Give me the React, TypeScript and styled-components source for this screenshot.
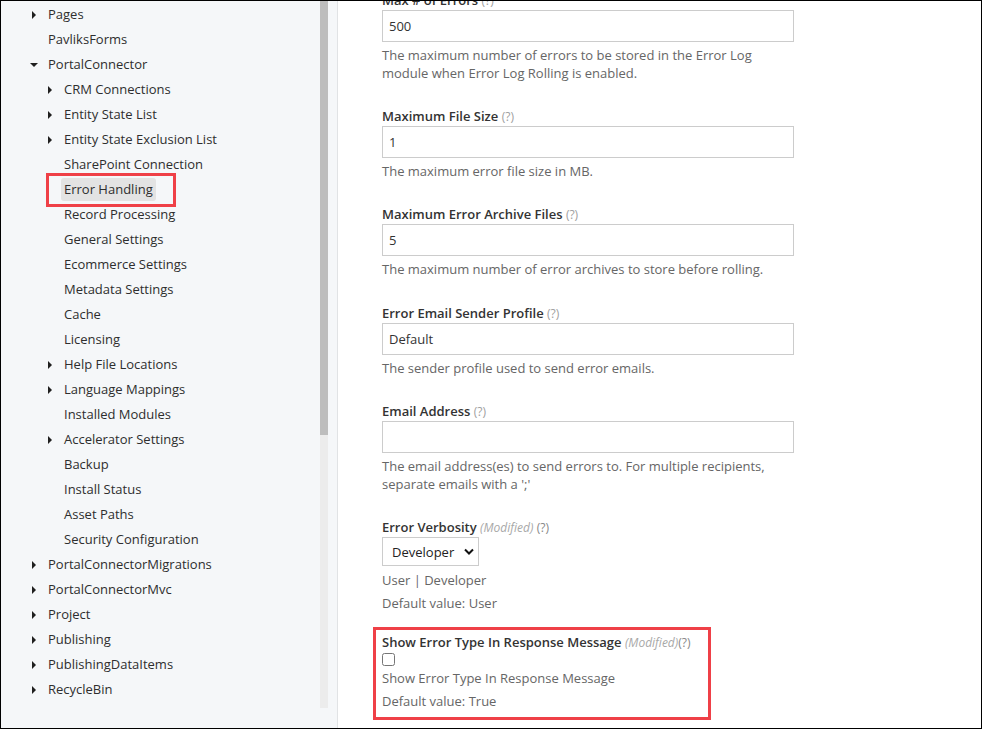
import React from "react"
import styled, { createGlobalStyle } from "styled-components"

const GlobalStyle = createGlobalStyle`
  html, body {
    margin: 0;
    padding: 0;
    background: #ffffff;
  }
  body {
    font-family: "Open Sans", "Liberation Sans", sans-serif;
    font-size: 13px;
    color: #333333;
  }
`

type TreeItem = {
  label: string
  depth: number
  toggle?: "closed" | "open"
  selected?: boolean
}

const tree: TreeItem[] = [
  { label: "Pages", depth: 0, toggle: "closed" },
  { label: "PavliksForms", depth: 0 },
  { label: "PortalConnector", depth: 0, toggle: "open" },
  { label: "CRM Connections", depth: 1, toggle: "closed" },
  { label: "Entity State List", depth: 1, toggle: "closed" },
  { label: "Entity State Exclusion List", depth: 1, toggle: "closed" },
  { label: "SharePoint Connection", depth: 1 },
  { label: "Error Handling", depth: 1, selected: true },
  { label: "Record Processing", depth: 1 },
  { label: "General Settings", depth: 1 },
  { label: "Ecommerce Settings", depth: 1 },
  { label: "Metadata Settings", depth: 1 },
  { label: "Cache", depth: 1 },
  { label: "Licensing", depth: 1 },
  { label: "Help File Locations", depth: 1, toggle: "closed" },
  { label: "Language Mappings", depth: 1, toggle: "closed" },
  { label: "Installed Modules", depth: 1 },
  { label: "Accelerator Settings", depth: 1, toggle: "closed" },
  { label: "Backup", depth: 1 },
  { label: "Install Status", depth: 1 },
  { label: "Asset Paths", depth: 1 },
  { label: "Security Configuration", depth: 1 },
  { label: "PortalConnectorMigrations", depth: 0, toggle: "closed" },
  { label: "PortalConnectorMvc", depth: 0, toggle: "closed" },
  { label: "Project", depth: 0, toggle: "closed" },
  { label: "Publishing", depth: 0, toggle: "closed" },
  { label: "PublishingDataItems", depth: 0, toggle: "closed" },
  { label: "RecycleBin", depth: 0, toggle: "closed" },
]

type Field = {
  label: string
  value: string
  help: string[]
}

const fields: Field[] = [
  {
    label: "Max # of Errors",
    value: "500",
    help: [
      "The maximum number of errors to be stored in the Error Log",
      "module when Error Log Rolling is enabled.",
    ],
  },
  { label: "Maximum File Size", value: "1", help: ["The maximum error file size in MB."] },
  {
    label: "Maximum Error Archive Files",
    value: "5",
    help: ["The maximum number of error archives to store before rolling."],
  },
  {
    label: "Error Email Sender Profile",
    value: "Default",
    help: ["The sender profile used to send error emails."],
  },
  {
    label: "Email Address",
    value: "",
    help: [
      "The email address(es) to send errors to. For multiple recipients,",
      "separate emails with a ';'",
    ],
  },
]

const TreeArrow = ({ state }: { state: "closed" | "open" }) => (
  <svg width="8" height="8" viewBox="0 0 8 8">
    {state === "closed" ? (
      <polygon points="2,0 6,4 2,8" fill="#1f1f1f" />
    ) : (
      <polygon points="0,2 8,2 4,6" fill="#1f1f1f" />
    )}
  </svg>
)

const Chevron = () => (
  <svg width="10" height="7" viewBox="0 0 10 7">
    <polyline points="1,1.5 5,5.5 9,1.5" fill="none" stroke="#111" strokeWidth="2" />
  </svg>
)

const App = () => {
  return (
    <>
      <GlobalStyle />
      <Frame>
        <Sidebar>
          <ScrollArea>
            <Tree>
              {tree.map((item) => (
                <TreeRow key={item.label} $depth={item.depth}>
                  <Toggle>{item.toggle && <TreeArrow state={item.toggle} />}</Toggle>
                  <TreeLabel $selected={item.selected}>{item.label}</TreeLabel>
                </TreeRow>
              ))}
            </Tree>
            <ScrollTrack>
              <ScrollThumb />
            </ScrollTrack>
          </ScrollArea>
        </Sidebar>
        <Main>
          <Form>
            {fields.map((f) => (
              <FieldBlock key={f.label}>
                <Label>
                  {f.label} <Hint>(?)</Hint>
                </Label>
                <TextInput defaultValue={f.value} />
                <Help>
                  {f.help.map((line) => (
                    <div key={line}>{line}</div>
                  ))}
                </Help>
              </FieldBlock>
            ))}

            <FieldBlock>
              <Label>
                Error Verbosity <Modified>(Modified)</Modified> <Hint $dark>(?)</Hint>
              </Label>
              <SelectBox>
                <NativeSelect defaultValue="Developer">
                  <option>User</option>
                  <option>Developer</option>
                </NativeSelect>
                <Chevron />
              </SelectBox>
              <Note>User | Developer</Note>
              <Note>Default value: User</Note>
            </FieldBlock>

            <Highlighted>
              <Label>
                Show Error Type In Response Message <Modified>(Modified)</Modified>
                <Hint $dark>(?)</Hint>
              </Label>
              <Check type="checkbox" />
              <Note $tight>Show Error Type In Response Message</Note>
              <Note>Default value: True</Note>
            </Highlighted>
          </Form>
        </Main>
      </Frame>
    </>
  )
}

const Frame = styled.div`
  width: 980px;
  height: 727px;
  border: 1px solid #000;
  display: flex;
  overflow: hidden;
  background: #fff;
`

const Sidebar = styled.div`
  width: 336px;
  flex-shrink: 0;
  background: #f5f7f9;
  border-right: 1px solid #e1e3e5;
  padding-bottom: 20px;
  display: flex;
  flex-direction: column;
`

const ScrollArea = styled.div`
  flex: 1;
  display: flex;
  min-height: 0;
`

const Tree = styled.div`
  flex: 1;
  padding-top: 1px;
`

const TreeRow = styled.div<{ $depth: number }>`
  height: 25px;
  display: flex;
  align-items: center;
  padding-left: ${(p) => 29 + p.$depth * 16}px;
  white-space: nowrap;
`

const Toggle = styled.span`
  width: 18px;
  flex-shrink: 0;
  display: flex;
  align-items: center;
`

const TreeLabel = styled.span<{ $selected?: boolean }>`
  color: #2e2e2e;
  line-height: 23px;
  ${(p) =>
    p.$selected &&
    `
    position: relative;
    background: #e3e3e3;
    border-radius: 3px;
    padding: 0 3px;
    margin-left: -3px;
    &::after {
      content: "";
      position: absolute;
      top: -5px;
      left: -15px;
      width: 124px;
      height: 28px;
      border: 3px solid #ef4047;
    }
  `}
`

const ScrollTrack = styled.div`
  width: 8px;
  margin-right: 9px;
  background: #ececec;
  display: flex;
  flex-direction: column;
`

const ScrollThumb = styled.div`
  height: 434px;
  background: #bdbdbd;
`

const Main = styled.div`
  flex: 1;
  background: #fff;
  padding-left: 44px;
  overflow: hidden;
`

const Form = styled.div`
  width: 412px;
  margin-top: -10.5px;
  display: flex;
  flex-direction: column;
  gap: 25.4px;
`

const FieldBlock = styled.div`
  display: flex;
  flex-direction: column;
  align-items: flex-start;
`

const Label = styled.div`
  font-weight: 600;
  line-height: 18px;
  color: #333;
  white-space: nowrap;
`

const Hint = styled.span<{ $dark?: boolean }>`
  font-weight: 400;
  font-size: 12px;
  color: ${(p) => (p.$dark ? "#888" : "#a0a0a0")};
`

const Modified = styled.span`
  font-weight: 400;
  font-style: italic;
  font-size: 12px;
  color: #a8a8a8;
`

const TextInput = styled.input`
  box-sizing: border-box;
  width: 412px;
  height: 32px;
  margin: 0;
  padding: 0 6px;
  border: 1px solid #cccccc;
  border-radius: 0;
  font-family: "Open Sans", "Liberation Sans", sans-serif;
  font-size: 13px;
  color: #333;
  outline: none;
`

const Help = styled.div`
  margin-top: 4px;
  line-height: 18px;
  color: #666;
`

const SelectBox = styled.div`
  box-sizing: border-box;
  margin-top: 0;
  width: 97px;
  height: 29px;
  border: 1px solid #cccccc;
  display: flex;
  align-items: center;
  padding: 0 4px 0 9px;
  gap: 4px;
`

const NativeSelect = styled.select`
  appearance: none;
  border: none;
  background: transparent;
  padding: 0;
  flex: 1;
  font-family: "Open Sans", "Liberation Sans", sans-serif;
  font-size: 13px;
  color: #222;
  outline: none;
`

const Note = styled.div<{ $tight?: boolean }>`
  margin-top: ${(p) => (p.$tight ? 3 : 5)}px;
  line-height: 18px;
  color: #666;
`

const Highlighted = styled(FieldBlock)`
  position: relative;
  margin-top: -5px;
  &::after {
    content: "";
    position: absolute;
    top: -6px;
    left: -9px;
    width: 332px;
    height: 87px;
    border: 3px solid #ef4047;
  }
`

const Check = styled.input`
  width: 13px;
  height: 13px;
  margin: 1px 0 0;
`

export default App
